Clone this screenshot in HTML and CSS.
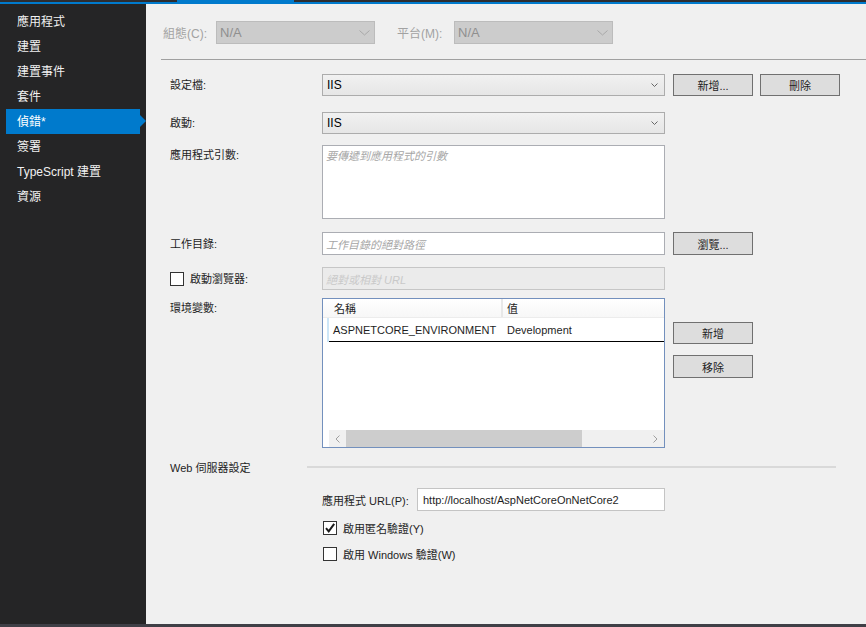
FILE: index.html
```html
<!DOCTYPE html>
<html lang="zh-Hant">
<head>
<meta charset="utf-8">
<title>偵錯</title>
<link rel="stylesheet" href="styles.css">
</head>
<body>
<div class="tabstrip"><div class="tab-active"></div></div>
<div class="accent"></div>
<div class="main">
  <nav class="sidebar">
    <div class="nav-item">應用程式</div>
    <div class="nav-item">建置</div>
    <div class="nav-item">建置事件</div>
    <div class="nav-item">套件</div>
    <div class="nav-item active">偵錯*</div>
    <div class="nav-item">簽署</div>
    <div class="nav-item">TypeScript 建置</div>
    <div class="nav-item">資源</div>
  </nav>
  <section class="content">
    <div class="config-row">
      <span class="dim-label">組態(C):</span>
      <div class="combo combo-disabled"><span>N/A</span><svg width="11" height="6" viewBox="0 0 11 6"><path d="M0.5 0.5 L5.5 5 L10.5 0.5" fill="none" stroke="#a8a8a8" stroke-width="1"/></svg></div>
      <span class="dim-label platform">平台(M):</span>
      <div class="combo combo-disabled"><span>N/A</span><svg width="11" height="6" viewBox="0 0 11 6"><path d="M0.5 0.5 L5.5 5 L10.5 0.5" fill="none" stroke="#a8a8a8" stroke-width="1"/></svg></div>
    </div>
    <div class="separator"></div>

    <div class="form">
      <div class="row row-profile">
        <span class="label">設定檔:</span>
        <div class="combo combo-field"><span>IIS</span><svg width="7" height="4" viewBox="0 0 7 4"><path d="M0.5 0.5 L3.5 3.5 L6.5 0.5" fill="none" stroke="#666" stroke-width="1"/></svg></div>
        <div class="btn btn-first">新增...</div>
        <div class="btn btn-second">刪除</div>
      </div>

      <div class="row row-launch">
        <span class="label">啟動:</span>
        <div class="combo combo-field"><span>IIS</span><svg width="7" height="4" viewBox="0 0 7 4"><path d="M0.5 0.5 L3.5 3.5 L6.5 0.5" fill="none" stroke="#666" stroke-width="1"/></svg></div>
      </div>

      <div class="row row-args top">
        <span class="label label-top">應用程式引數:</span>
        <div class="textarea"><span class="placeholder">要傳遞到應用程式的引數</span></div>
      </div>

      <div class="row row-workdir">
        <span class="label">工作目錄:</span>
        <div class="textbox"><span class="placeholder">工作目錄的絕對路徑</span></div>
        <div class="btn btn-first btn-tall">瀏覽...</div>
      </div>

      <div class="row row-browser">
        <span class="label label-check"><span class="checkbox"></span>啟動瀏覽器:</span>
        <div class="textbox textbox-disabled"><span class="placeholder placeholder-light">絕對或相對 URL</span></div>
      </div>

      <div class="row row-env top">
        <span class="label label-top">環境變數:</span>
        <div class="grid">
          <div class="grid-head">
            <div class="rowhead"></div>
            <div class="hcell hcell-name">名稱</div>
            <div class="hcell hcell-value">值</div>
          </div>
          <div class="grid-row">
            <div class="rowhead rowhead-sel"></div>
            <div class="cell cell-name">ASPNETCORE_ENVIRONMENT</div>
            <div class="cell cell-value">Development</div>
          </div>
          <div class="grid-blank"></div>
          <div class="grid-scroll">
            <div class="rowhead"></div>
            <div class="hscroll">
              <div class="sb-arrow"><svg width="5" height="8" viewBox="0 0 5 8"><path d="M4.5 0.5 L1 4 L4.5 7.5" fill="none" stroke="#a0a0a0" stroke-width="1"/></svg></div>
              <div class="sb-thumb"></div>
              <div class="sb-track"></div>
              <div class="sb-arrow"><svg width="5" height="8" viewBox="0 0 5 8"><path d="M0.5 0.5 L4 4 L0.5 7.5" fill="none" stroke="#a0a0a0" stroke-width="1"/></svg></div>
            </div>
          </div>
        </div>
        <div class="btn-col">
          <div class="btn">新增</div>
          <div class="btn btn-tall">移除</div>
        </div>
      </div>

      <div class="web-head">
        <span>Web 伺服器設定</span>
        <div class="web-line"></div>
      </div>

      <div class="web-url">
        <span class="url-label">應用程式 URL(P):</span>
        <div class="textbox url-box">http://localhost/AspNetCoreOnNetCore2</div>
      </div>

      <div class="check-row check-first">
        <span class="checkbox checked"><svg width="12" height="12" viewBox="0 0 12 12"><path d="M2 6.2 L4.7 9.3 L10.2 1.8" fill="none" stroke="#1a1a1a" stroke-width="2"/></svg></span>
        <span>啟用匿名驗證(Y)</span>
      </div>
      <div class="check-row check-second">
        <span class="checkbox"></span>
        <span>啟用 Windows 驗證(W)</span>
      </div>
    </div>
  </section>
</div>
<div class="statusbar"></div>
</body>
</html>
```

FILE: styles.css
```css
* { box-sizing: border-box; }

html, body {
  margin: 0;
  padding: 0;
}

body {
  width: 866px;
  height: 627px;
  overflow: hidden;
  font-family: "Liberation Sans", "Noto Sans CJK TC", sans-serif;
  font-size: 11px;
  color: #1e1e1e;
  background: #f0f0f0;
}

.tabstrip {
  height: 2px;
  background: #2d2d30;
  padding-left: 177px;
}

.tab-active {
  width: 117px;
  height: 2px;
  background: #007acc;
}

.accent {
  height: 2px;
  background: #007acc;
}

.main {
  display: flex;
  height: 620px;
}

.statusbar {
  height: 3px;
  background: #3f3f46;
}

/* Sidebar */
.sidebar {
  width: 146px;
  flex: none;
  background: #252526;
  padding-top: 5px;
}

.nav-item {
  position: relative;
  height: 25px;
  line-height: 23px;
  padding-top: 2px;
  margin-left: 6px;
  width: 134px;
  padding-left: 11px;
  font-size: 12px;
  color: #f1f1f1;
  white-space: nowrap;
}

.nav-item.active {
  background: #007acc;
  color: #ffffff;
}

.nav-item.active::after {
  content: "";
  position: absolute;
  right: -6px;
  top: 6px;
  border-left: 6px solid #007acc;
  border-top: 6.5px solid transparent;
  border-bottom: 6.5px solid transparent;
}

/* Content */
.content {
  flex: 1;
  background: #f0f0f0;
}

.config-row {
  display: flex;
  align-items: center;
  height: 23px;
  margin-top: 17px;
  padding-left: 17px;
}

.dim-label {
  color: #a2a2a2;
  font-size: 12px;
  width: 53px;
}

.dim-label.platform {
  margin-left: 22px;
  width: 57px;
}

.combo {
  display: flex;
  align-items: center;
  justify-content: space-between;
  white-space: nowrap;
}

.combo-disabled {
  width: 159px;
  height: 23px;
  background: #cccccc;
  border: 1px solid #bcbcbc;
  padding: 0 3px 0 3px;
  color: #8f8f8f;
  font-size: 13px;
}

.combo-disabled svg {
  margin-right: 1px;
}

.separator {
  height: 1px;
  background: #a0a0a0;
  margin-top: 15px;
  margin-left: 15px;
}

.form {
  padding-left: 24px;
}

.row {
  display: flex;
  align-items: center;
}

.row.top {
  align-items: flex-start;
}

.label {
  width: 152px;
  flex: none;
  line-height: 14px;
}

.label-top {
  padding-top: 3px;
}

.label-check {
  display: flex;
  align-items: center;
}

.label-check .checkbox {
  margin-right: 6px;
}

.combo-field {
  width: 343px;
  height: 22px;
  background: linear-gradient(#f1f1f1, #e6e6e6);
  border: 1px solid #acacac;
  padding: 0 6px 0 4px;
  font-size: 12px;
  color: #000;
}

.btn {
  width: 80px;
  height: 22px;
  background: #dddddd;
  border: 1px solid #707070;
  display: flex;
  align-items: center;
  justify-content: center;
  flex: none;
}

.btn-tall {
  height: 23px;
}

.btn-first {
  margin-left: 8px;
}

.btn-second {
  margin-left: 7px;
}

.row-profile { margin-top: 14px; }
.row-launch { margin-top: 16px; }
.row-args { margin-top: 11px; }
.row-workdir { margin-top: 13px; }
.row-browser { margin-top: 12px; }
.row-env { margin-top: 8px; }

.textarea {
  width: 343px;
  height: 74px;
  background: #ffffff;
  border: 1px solid #abadb3;
  padding: 1px 3px;
}

.textbox {
  width: 343px;
  height: 23px;
  background: #ffffff;
  border: 1px solid #abadb3;
  padding: 0 3px;
  display: flex;
  align-items: center;
  white-space: nowrap;
}

.textbox-disabled {
  background: #ebebeb;
  border-color: #c6c6c6;
}

.placeholder {
  font-style: italic;
  color: #a6a6a6;
}

.placeholder-light {
  color: #c9c9c9;
}

.checkbox {
  width: 14px;
  height: 14px;
  flex: none;
  background: #ffffff;
  border: 1px solid #333333;
  display: inline-flex;
  align-items: center;
  justify-content: center;
}

/* Grid */
.grid {
  width: 343px;
  height: 150px;
  border: 1px solid #7390bd;
  background: #ffffff;
  display: flex;
  flex-direction: column;
}

.grid-head {
  display: flex;
  height: 19px;
  flex: none;
  background: linear-gradient(#ffffff, #f7f7f7);
  border-bottom: 1px solid #ececec;
}

.rowhead {
  width: 6px;
  flex: none;
}

.rowhead-sel {
  border-right: 2px solid #cde6f7;
}

.hcell {
  display: flex;
  align-items: center;
  white-space: nowrap;
}

.hcell-name {
  width: 174px;
  padding-left: 5px;
  border-right: 2px solid #e8e8e8;
}

.hcell-value {
  flex: 1;
  padding-left: 4px;
}

.grid-row {
  display: flex;
  height: 24px;
  flex: none;
}

.cell {
  display: flex;
  align-items: center;
  white-space: nowrap;
  border-bottom: 1px solid #000000;
  font-size: 11px;
}

.cell-name {
  width: 174px;
  padding-left: 4px;
}

.cell-value {
  flex: 1;
  padding-left: 4px;
}

.grid-blank {
  flex: 1;
}

.grid-scroll {
  display: flex;
  height: 17px;
  flex: none;
}

.hscroll {
  flex: 1;
  display: flex;
  background: #f0f0f0;
}

.sb-arrow {
  width: 17px;
  display: flex;
  align-items: center;
  justify-content: center;
}

.sb-thumb {
  width: 236px;
  background: #cdcdcd;
}

.sb-track {
  flex: 1;
}

.btn-col {
  margin-left: 8px;
  margin-top: 24px;
  display: flex;
  flex-direction: column;
  gap: 11px;
}

/* Web server section */
.web-head {
  display: flex;
  align-items: center;
  height: 14px;
  margin-top: 12px;
  white-space: nowrap;
}

.web-line {
  flex: 1;
  height: 2px;
  background: #d9d9d9;
  margin-left: 57px;
  margin-right: 30px;
}

.web-url {
  display: flex;
  align-items: center;
  margin-top: 14px;
  padding-left: 152px;
}

.url-label {
  width: 95px;
  flex: none;
}

.url-box {
  width: 248px;
  padding-left: 5px;
  border-color: #c4c4c4;
}

.check-row {
  display: flex;
  align-items: center;
  gap: 6px;
  padding-left: 153px;
  height: 14px;
}

.check-first { margin-top: 10px; }
.check-second { margin-top: 12px; }
```
